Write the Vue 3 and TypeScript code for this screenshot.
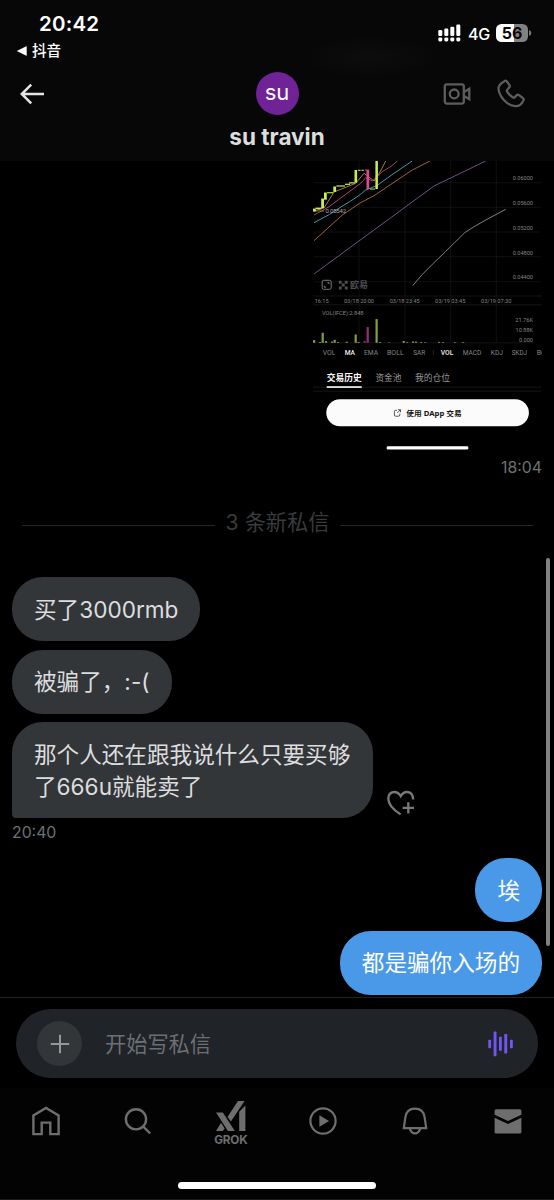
<script setup lang="ts">
interface Label { x: number; y: number; w: number; text: string; on?: boolean }
interface Bar { x: number; y: number; w: number; h: number; c: string }

const lime = '#c8f04c'
const pink = '#e0469c'

const prices: Label[] = [
  { x: 512.7, y: 180.4, w: 20.3, text: '0.06000' },
  { x: 512.7, y: 205.2, w: 20.3, text: '0.05600' },
  { x: 512.7, y: 230, w: 20.3, text: '0.05200' },
  { x: 512.7, y: 254.6, w: 20.3, text: '0.04800' },
  { x: 512.7, y: 279.4, w: 20.3, text: '0.04400' },
  { x: 515.3, y: 322, w: 17.7, text: '21.76K' },
  { x: 515.6, y: 331.8, w: 17.4, text: '10.88K' },
  { x: 519, y: 341.5, w: 14, text: '0.000' },
]
const dates: Label[] = [
  { x: 314.7, y: 302.6, w: 14, text: '16:15' },
  { x: 344, y: 302.6, w: 30, text: '03/18 20:00' },
  { x: 389.7, y: 302.6, w: 30, text: '03/18 23:45' },
  { x: 435, y: 302.6, w: 30.4, text: '03/19 03:45' },
  { x: 481, y: 302.6, w: 30.4, text: '03/19 07:30' },
  { x: 322, y: 314.6, w: 41.5, text: 'VOL(IFCE):2.848' },
]
const indicators: Label[] = [
  { x: 322.7, y: 354.6, w: 12.6, text: 'VOL' },
  { x: 344.7, y: 354.6, w: 10.3, text: 'MA', on: true },
  { x: 364, y: 354.6, w: 14, text: 'EMA' },
  { x: 387, y: 354.6, w: 16.7, text: 'BOLL' },
  { x: 413.3, y: 354.6, w: 12, text: 'SAR' },
  { x: 440.7, y: 354.6, w: 12.6, text: 'VOL', on: true },
  { x: 462.7, y: 354.6, w: 18.6, text: 'MACD' },
  { x: 490.7, y: 354.6, w: 12.3, text: 'KDJ' },
  { x: 511.7, y: 354.6, w: 15.3, text: 'SKDJ' },
  { x: 536.7, y: 354.6, w: 16.7, text: 'BOLL' },
]
const sections: Label[] = [
  { x: 326.7, y: 380.8, w: 35, text: '交易历史', on: true },
  { x: 375.4, y: 380.8, w: 26, text: '资金池' },
  { x: 415, y: 380.8, w: 35, text: '我的仓位' },
]
const candles: Bar[] = [
  { x: 313, y: 208.6, w: 2.8, h: 3, c: lime },
  { x: 315.5, y: 207.6, w: 6, h: 1.6, c: lime },
  { x: 321.2, y: 198.5, w: 2.8, h: 9.6, c: lime },
  { x: 324, y: 192.5, w: 2.8, h: 7.2, c: lime },
  { x: 327, y: 192.2, w: 6.2, h: 1.1, c: lime },
  { x: 333.3, y: 186.5, w: 2.8, h: 5.4, c: lime },
  { x: 336.4, y: 185.4, w: 8.6, h: 1.2, c: lime },
  { x: 345, y: 183.7, w: 5, h: 1.2, c: lime },
  { x: 349, y: 182.3, w: 6, h: 1.2, c: lime },
  { x: 354.5, y: 170, w: 2.6, h: 12.6, c: lime },
  { x: 358, y: 169.8, w: 2.6, h: 1, c: lime },
  { x: 361.5, y: 169.8, w: 2.6, h: 1, c: lime },
  { x: 365, y: 169.5, w: 2, h: 1, c: pink },
  { x: 366.5, y: 169.7, w: 2.7, h: 19.4, c: pink },
  { x: 370, y: 188.6, w: 5, h: 0.9, c: lime },
  { x: 375.4, y: 160, w: 2.5, h: 29, c: lime },
]
const olive = '#83a03d'
const volumes: Bar[] = ([
  [313, 2.7, olive], [319, 0.8, olive], [321.6, 10, olive], [325, 1.7, olive], [331, 1.2, olive],
  [333.6, 3, olive], [337, 0.8, olive], [345.6, 1.1, olive], [354.6, 8.3, olive], [357.6, 0.8, olive],
  [363.6, 1.8, '#8c2c66'], [366.6, 15.7, '#963075'], [375.5, 23.7, olive], [379, 0.8, olive],
  [388, 0.4, olive], [402.6, 1.8, olive], [406, 0.7, olive], [412, 1.3, olive], [415, 1.2, olive],
  [420, 0.8, olive], [424, 0.6, olive], [438, 0.9, olive], [442, 0.7, olive], [454, 0.6, olive], [462, 0.7, olive],
] as [number, number, string][]).map(([x, h, c]) => ({ x, y: 342.8 - h, w: 2.2, h, c }))

const lines = [
  { d: 'M314 240.7 342.3 215 360 203 374 195.7 412.3 170 430 161', c: '#9a6242' },
  { d: 'M314 222.7Q330 215 344 205 358 197 365.7 190L376.7 185.7 393 174 412.3 161', c: '#4b97a5' },
  { d: 'M314 215Q322 211 329 206.7L360.7 183.3 365.7 177.7 372.3 181 382.3 171.7 392 165.7 397.3 161', c: '#a84766' },
  { d: 'M314 211 324 208 334 192 355.7 183.3 364 173.3 374 181 380 172 385.7 161', c: '#ad7a3a' },
  { d: 'M314 274 365.7 236 374 230 434 186 485.7 161', c: '#70508a' },
  { d: 'M412.7 285.7Q422 274 432.3 264.3T464.7 232.7Q473 227 484 221L505.7 209.3', c: '#79857a' },
]

const incoming = ['买了3000rmb', '被骗了，:-(', '那个人还在跟我说什么只要买够了666u就能卖了']
const outgoing = ['埃', '都是骗你入场的']
</script>

<template>
  <main class="phone">
    <header class="top">
      <div class="status">
        <div class="left">
          <div class="clock">20:42</div>
          <div class="return">
            <svg width="10" height="10" viewBox="0 0 10 10"><path d="M.4 5 9.4.6V9.4Z" fill="#fff" stroke="#fff" stroke-width=".6" stroke-linejoin="round" /></svg>
            <span>抖音</span>
          </div>
        </div>
        <div class="right">
          <svg width="24" height="18" viewBox="0 0 24 18" fill="#fff">
            <rect x=".3" y="6" width="4" height="6" rx="1.2" /><rect x="6.3" y="4.6" width="4" height="7.4" rx="1.2" />
            <rect x="12.3" y="2.8" width="4" height="9.2" rx="1.2" /><rect x="18.3" y=".6" width="4" height="11.4" rx="1.2" />
            <rect x=".3" y="13.4" width="4" height="4" rx="1.4" /><rect x="6.3" y="13.4" width="4" height="4" rx="1.4" />
            <rect x="12.3" y="13.4" width="4" height="4" rx="1.4" /><rect x="18.3" y="13.4" width="4" height="4" rx="1.4" />
          </svg>
          <span class="net">4G</span>
          <div class="battery">56</div>
          <svg class="nub" width="3" height="6" viewBox="0 0 3 6"><path d="M0 0Q2.4 1 2.4 3T0 6Z" fill="#777" /></svg>
        </div>
      </div>
      <div class="nav">
        <svg class="back" width="26" height="22" viewBox="0 0 26 22" fill="none" stroke="#e3e5e6" stroke-width="2.5"><path d="M12.2 1.7 2.8 11l9.4 9.3M2.8 11H25" /></svg>
        <div class="person">
          <div class="avatar">su</div>
          <div class="name">su travin</div>
        </div>
        <div class="calls">
          <svg width="28" height="22" viewBox="0 0 28 22" fill="none" stroke="#5d5d5d" stroke-width="2.3">
            <rect x="1.8" y="1.3" width="19" height="19.3" rx="2" /><circle cx="11.2" cy="10.9" r="4.4" /><path d="M21 8.9 26.3 5.7V16.3L21 13.1" />
          </svg>
          <svg width="28" height="29" viewBox="0 0 28 29" fill="none" stroke="#5d5d5d" stroke-width="2.3" stroke-linejoin="round">
            <path d="M7.4 2.2Q8.7 1.2 9.9 2.5L12.5 6.1Q13.3 7.4 12.1 8.6L10.1 10.9Q9.5 11.8 10.1 12.7 12.3 16.3 16 18.5 16.9 19 17.7 18.3L19.5 16.4Q20.7 15.3 22.1 16.2L25.9 19.1Q27.3 20.3 26.3 21.6 23.7 27.4 18.3 27.2 12 26.8 6.9 21.1 1.5 14.7 1.5 8.9 1.6 6.7 4.2 4.4Z" />
          </svg>
        </div>
      </div>
    </header>

    <section class="chat">
      <svg class="photo" width="229" height="299" viewBox="313 161 229 299">
        <g stroke="#111413" stroke-width=".8">
          <path d="M359 161V342M405 161V342M450.7 161V342M496.3 161V342M314 182.7H541M314 207.3H541M314 232H541M314 256.7H541M314 281.7H541" />
          <path d="M313 296H542M313 304.8H542M313 342.8H533M313 387.2H541M313 391.2H541" stroke="#1a1a1a" />
        </g>
        <path v-for="l in lines" :key="l.d" :d="l.d" fill="none" :stroke="l.c" stroke-width="1" />
        <rect v-for="(b, i) in candles" :key="'c' + i" :x="b.x" :y="b.y" :width="b.w" :height="b.h" :fill="b.c" />
        <rect v-for="(b, i) in volumes" :key="'v' + i" :x="b.x" :y="b.y" :width="b.w" :height="b.h" :fill="b.c" />
        <path d="M316 211H324" stroke="#888" stroke-width=".8" />
        <text x="325.6" y="213.2" class="small bright" textLength="20.4">0.05542</text>
        <g fill="none" stroke="#777" stroke-width="1">
          <rect x="322.2" y="280.3" width="9" height="9" rx="1.5" />
          <path d="M327.5 282.6H329V284.2M324.3 285.7V287.2H326" />
        </g>
        <path d="M338.8 280.8h2.9v2.9h-2.9zM344.8 280.8h2.9v2.9h-2.9zM341.8 283.6h2.9v2.9h-2.9zM338.8 286.5h2.9v2.9h-2.9zM344.8 286.5h2.9v2.9h-2.9z" fill="#4e4e4e" />
        <text x="350" y="288.4" class="brand" textLength="18">欧易</text>
        <text v-for="t in prices" :key="t.text" :x="t.x" :y="t.y" :textLength="t.w" lengthAdjust="spacingAndGlyphs" class="small">{{ t.text }}</text>
        <text v-for="t in dates" :key="t.text" :x="t.x" :y="t.y" :textLength="t.w" lengthAdjust="spacingAndGlyphs" class="small">{{ t.text }}</text>
        <text v-for="t in indicators" :key="t.x" :x="t.x" :y="t.y" :textLength="t.w" lengthAdjust="spacingAndGlyphs" class="ind" :class="{ on: t.on }">{{ t.text }}</text>
        <path d="M433.3 350V355" stroke="#2b2b2b" stroke-width=".8" />
        <text v-for="t in sections" :key="t.text" :x="t.x" :y="t.y" :textLength="t.w" lengthAdjust="spacingAndGlyphs" class="sec" :class="{ on: t.on }">{{ t.text }}</text>
        <rect x="326.7" y="386.2" width="35" height="1.7" fill="#f2f2f2" />
        <rect x="326.3" y="399.3" width="202.6" height="27" rx="13.5" fill="#fbfbfb" />
        <path d="M397 410.3H395.6Q394.4 410.3 394.4 411.5V415Q394.4 416.2 395.6 416.2H398.6Q399.8 416.2 399.8 415V413.6M398 409.7H400.5V412.2M400.3 409.9 397.2 413" fill="none" stroke="#222" stroke-width=".75" />
        <text x="406.3" y="415.7" class="dapp" textLength="55.4" lengthAdjust="spacingAndGlyphs">使用 DApp 交易</text>
        <rect x="386.7" y="446.3" width="81.6" height="3.1" rx="1.2" fill="#fff" />
      </svg>
      <time class="sent">18:04</time>

      <div class="divider"><i></i><span>3 条新私信</span><i></i></div>

      <div class="group">
        <div v-for="(m, i) in incoming" :key="m" class="row">
          <p class="bubble" :class="{ tail: i === 2 }">{{ m }}</p>
          <svg v-if="i === 2" class="react" width="28" height="26" viewBox="0 0 28 26" fill="none" stroke="#77797b" stroke-width="2.3">
            <path d="M13.6 24.4Q1.3 16.6 1.3 8.5 1.4 2.6 7 2 11.3 1.8 13.7 6.1 16 1.8 20.4 2 26 2.6 26.1 9.6M21.3 12.2V23.6M15.6 17.9H27" />
          </svg>
        </div>
      </div>
      <time class="received">20:40</time>

      <div class="group mine">
        <p v-for="m in outgoing" :key="m" class="bubble blue">{{ m }}</p>
      </div>
      <div class="scroll"></div>
    </section>

    <section class="composer">
      <div class="field">
        <div class="plus"><svg width="20" height="20" viewBox="0 0 20 20" stroke="#94979a" stroke-width="2"><path d="M10 .8V19.2M.8 10H19.2" /></svg></div>
        <span class="hint">开始写私信</span>
        <svg class="wave" width="26" height="26" viewBox="0 0 26 26" fill="#7256ef">
          <rect x=".3" y="8.7" width="2.8" height="8.5" rx=".6" /><rect x="5.6" y=".4" width="2.9" height="24.8" rx=".6" />
          <rect x="11" y="5.8" width="2.8" height="14" rx=".6" /><rect x="16.3" y="3" width="2.9" height="19.5" rx=".6" /><rect x="22" y="8.7" width="2.8" height="8.5" rx=".6" />
        </svg>
      </div>
    </section>

    <footer class="bottom">
      <nav class="tabs">
        <div class="tab"><svg width="28" height="30" viewBox="0 0 28 30" fill="none" stroke="#6e6e6e" stroke-width="2.4"><path d="M1.4 28.1V9.5L14 2 26.6 9.5V28.1H18.3V16.6H9.7V28.1Z" /></svg></div>
        <div class="tab"><svg width="28" height="30" viewBox="0 0 28 30" fill="none" stroke="#6e6e6e" stroke-width="2.4"><circle cx="12" cy="13.3" r="10.1" /><path d="M19.3 20.6 26.2 27.5" /></svg></div>
        <div class="tab grok">
          <svg width="30" height="31" viewBox="0 0 30 31" fill="#6e6e6e"><path d="M0 11.4H6.9L18.8 30H11.9ZM5 21.8 8.7 27.4 6.8 30H0ZM11.5 16 21.9 0H28.6L14.9 20.4ZM23.2 10.7 29.4 4.5V30H23.2Z" /></svg>
          <span>GROK</span>
        </div>
        <div class="tab"><svg width="28" height="30" viewBox="0 0 28 30"><circle cx="14" cy="15" r="12.6" fill="none" stroke="#6e6e6e" stroke-width="2.2" /><path d="M10.4 9.2 20.1 15 10.4 20.8Z" fill="#6e6e6e" /></svg></div>
        <div class="tab"><svg width="28" height="30" viewBox="0 0 28 30" fill="none" stroke="#6e6e6e" stroke-width="2.2"><path d="M2.8 22.2 4.4 11.2Q5.5 2.6 14 2.6T23.6 11.2L25.2 22.2ZM8.6 22.4Q10.2 27.4 14 27.4T19.4 22.4" /></svg></div>
        <div class="tab"><svg width="28" height="30" viewBox="0 0 28 30" fill="#6e6e6e"><path d="M.6 8.7V4.8Q.6 3.2 2.2 3.2H25.8Q27.4 3.2 27.4 4.8V8.7L14 14.9ZM.6 11.7 14 18 27.4 11.7V25.9Q27.4 27.5 25.8 27.5H2.2Q.6 27.5.6 25.9Z" /></svg></div>
      </nav>
      <div class="home"></div>
    </footer>
  </main>
</template>

<style>
body { margin: 0; background: #000; }
</style>

<style scoped>
.phone { width: 554px; height: 1200px; overflow: hidden; display: flex; flex-direction: column; background: #000; color: #fff; font-family: Inter, "Noto Sans CJK SC", sans-serif; }
svg { display: block; flex: none; }
.top { height: 161px; flex: none; background: radial-gradient(ellipse 70px 22px at 370px 57px, #0d0d0d, #070707); }
.status { height: 68px; display: flex; justify-content: space-between; }
.left { padding-top: 11px; }
.clock { margin-left: 39px; font-size: 20.5px; line-height: 26px; font-weight: 600; letter-spacing: .2px; }
.return { display: flex; align-items: center; gap: 5px; margin: 3px 0 0 17px; font-size: 14.6px; line-height: 22px; font-weight: 500; }
.right { display: flex; align-items: center; height: 18px; margin: 24px 22px 0 0; }
.net { margin: 1px 0 0 6px; width: 22px; font-size: 16px; letter-spacing: -.2px; font-weight: 500; }
.battery { margin-left: 6px; width: 32px; height: 18.5px; border-radius: 5.5px; background: linear-gradient(90deg, #fff 57%, #818181 57%); color: #080808; font-size: 16px; line-height: 19px; font-weight: 700; text-align: center; }
.nub { margin-left: 1px; }
.nav { display: grid; grid-template-columns: 1fr auto 1fr; }
.back { margin: 14.5px 0 0 19px; }
.person { display: flex; flex-direction: column; align-items: center; margin-top: 4px; }
.avatar { width: 43px; height: 43px; border-radius: 50%; background: #702397; font-size: 22px; line-height: 41px; text-align: center; }
.name { margin-top: 8.5px; font-size: 22.5px; line-height: 26px; font-weight: 700; color: #dcdddd; }
.calls { display: flex; justify-content: flex-end; align-items: center; gap: 26px; height: 29px; margin: 11px 29px 0 0; }
.chat { position: relative; flex: none; height: 836px; display: flex; flex-direction: column; }
.photo { align-self: flex-end; margin-right: 12px; }
.photo text { font-family: Roboto, "Noto Sans CJK SC", sans-serif; }
.photo .small { font-size: 6px; fill: #858585; }
.photo .bright { fill: #aaa; }
.photo .brand { font-size: 9px; font-weight: 700; fill: #4e4e4e; }
.photo .ind { font-size: 7.3px; fill: #858585; }
.photo .ind.on { fill: #eee; font-weight: 500; }
.photo .sec { font-size: 8.8px; fill: #999; }
.photo .sec.on { fill: #fff; font-weight: 700; }
.photo .dapp { font-family: "Noto Sans", "Noto Sans CJK SC", sans-serif; font-size: 7.4px; font-weight: 700; fill: #161616; }
time { color: #6e7275; font-size: 15.8px; line-height: 20px; font-weight: 400; }
.sent { align-self: flex-end; margin: -2px 12px 0 0; }
.divider { display: flex; align-items: center; gap: 11px; margin: 29px 21px 0 22px; height: 32px; font-size: 21.2px; line-height: 28px; color: #393b3d; white-space: nowrap; }
.divider span { margin-top: -3px; }
.divider i { flex: 1; height: 1px; margin-top: 5px; background: #242628; }
.group { display: flex; flex-direction: column; align-items: flex-start; gap: 8.5px; margin: 38px 12px 0; }
.row { display: flex; align-items: flex-end; gap: 14px; }
.bubble { box-sizing: border-box; margin: 0; max-width: 361px; padding: 16.5px 22px 15.5px 22px; border-radius: 31px; background: #333639; color: #dcdddf; font-size: 22.6px; line-height: 32px; font-weight: 400; }
.tail { border-bottom-left-radius: 4px; padding-right: 20px; }
.react { margin-bottom: 2px; }
.received { margin: 5px 0 0 12px; }
.mine { align-items: flex-end; margin-top: 15px; }
.blue { background: #4a99e9; color: #fff; }
.scroll { position: absolute; left: 546px; top: 397px; width: 4px; height: 388px; border-radius: 2px; background: #818181; }
.composer { box-sizing: border-box; flex: none; height: 91px; border-top: 1px solid #222; padding: 11px 16px 0; }
.field { display: flex; align-items: center; box-sizing: border-box; height: 69px; border-radius: 35px; background: #202327; padding: 0 24px 0 21px; }
.plus { display: grid; place-items: center; width: 45px; height: 45px; border-radius: 50%; background: #333639; }
.hint { margin: -2px 0 0 23px; flex: 1; font-size: 21.2px; color: #6c7074; }
.bottom { box-sizing: border-box; flex: none; height: 112px; background: #030303; border-bottom: 1px solid #1b1b1b; }
.tabs { display: grid; grid-template-columns: repeat(6, 1fr); height: 94px; }
.tab { display: flex; flex-direction: column; align-items: center; padding-top: 18px; }
.grok { padding-top: 13px; }
.grok span { margin-top: 2px; font-size: 11.8px; line-height: 13px; font-weight: 700; color: #6e6e6e; letter-spacing: -.2px; }
.home { width: 198px; height: 7px; margin: 0 auto; border-radius: 4px; background: #fff; }
</style>
